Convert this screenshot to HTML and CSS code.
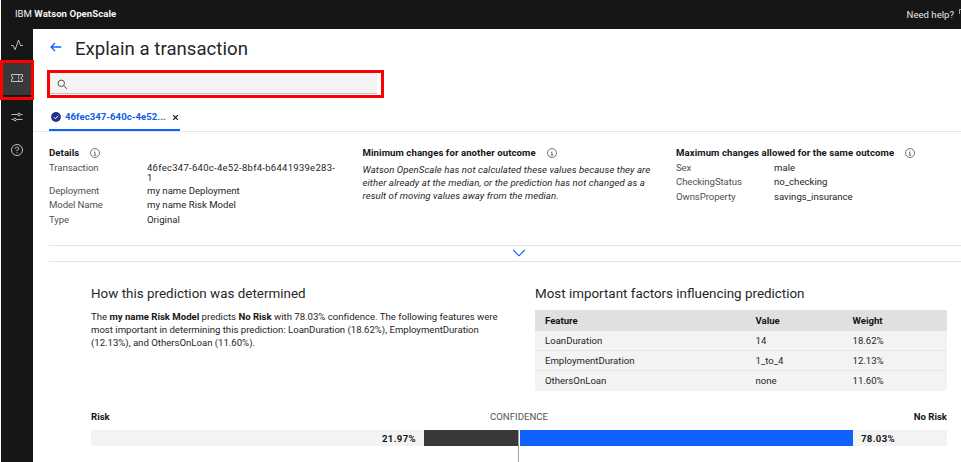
FILE: index.html
```html
<!DOCTYPE html>
<html lang="en">
<head>
<meta charset="utf-8">
<title>IBM Watson OpenScale</title>
<link rel="stylesheet" href="styles.css">
</head>
<body>
<header class="topbar">
  <div class="brand">IBM <b>Watson OpenScale</b></div>
  <div class="help">Need help?<i class="help-mark"></i></div>
</header>
<div class="shell">
  <nav class="rail">
    <a class="rail-item pulse"><svg viewBox="0 0 14 14"><path d="M1 7.500h2l2.200 4.200L8.500 2l2 5.500H13"/></svg></a>
    <a class="rail-item ticket"><svg viewBox="0 0 14 14"><path d="M1.500 3.500h11v2.100a1.400 1.400 0 0 0 0 2.800v2.100h-11V8.400a1.400 1.400 0 0 0 0-2.800z"/><path d="M8.700 4v1.500M8.700 6.300v1.500M8.700 8.600v1.500"/></svg></a>
    <a class="rail-item sliders"><svg viewBox="0 0 14 14"><path d="M1.500 4.500h6M10.500 4.500h2M1.500 9.500h2M6.500 9.500h6"/><circle cx="9" cy="4.500" r="1.300"/><circle cx="5" cy="9.500" r="1.300"/></svg></a>
    <a class="rail-item question"><svg viewBox="0 0 14 14"><circle cx="7" cy="7" r="5.500"/><path d="M5.300 5.900V5.500A1.300 1.300 0 0 1 6.600 4.200h.9a1.300 1.300 0 0 1 0 2.700H7v1.200M7 9.300v1"/></svg></a>
  </nav>
  <main class="page">
    <div class="title-row">
      <svg class="back" viewBox="0 0 12 10"><path d="M11.200 5H1.200M5 1L1.100 5 5 9"/></svg>
      <h1>Explain a transaction</h1>
    </div>
    <div class="search"><div class="field"><svg viewBox="0 0 12 12"><circle cx="4.700" cy="4.700" r="3.500"/><path d="M7.300 7.300l3.500 3.500"/></svg></div></div>
    <div class="tabs">
      <div class="tab">
        <svg class="check" viewBox="0 0 10 10"><circle cx="5" cy="5" r="4.900"/><path d="M2.800 5.100l1.600 1.600 2.900-3"/></svg>
        <span class="tab-name">46fec347-640c-4e52...</span>
        <svg class="close" viewBox="0 0 6 6"><path d="M1 1l4 4M5 1L1 5"/></svg>
      </div>
    </div>
    <section class="summary">
      <div class="block">
        <h2>Details <svg class="info" viewBox="0 0 10 10"><circle cx="5" cy="5" r="4.500"/><path d="M4 4.400h1v2.800M3.700 7.200h2.600M4.600 2.800h.8"/></svg></h2>
        <dl>
          <dt>Transaction</dt><dd class="ident">46fec347-640c-4e52-8bf4-b6441939e283-<br>1</dd>
          <dt>Deployment</dt><dd>my name Deployment</dd>
          <dt>Model Name</dt><dd>my name Risk Model</dd>
          <dt>Type</dt><dd>Original</dd>
        </dl>
      </div>
      <div class="block">
        <h2>Minimum changes for another outcome <svg class="info" viewBox="0 0 10 10"><circle cx="5" cy="5" r="4.500"/><path d="M4 4.400h1v2.800M3.700 7.200h2.600M4.600 2.800h.8"/></svg></h2>
        <p class="note">Watson OpenScale has not calculated these values because they are<br>either already at the median, or the prediction has not changed as a<br>result of moving values away from the median.</p>
      </div>
      <div class="block">
        <h2>Maximum changes allowed for the same outcome <svg class="info" viewBox="0 0 10 10"><circle cx="5" cy="5" r="4.500"/><path d="M4 4.400h1v2.800M3.700 7.200h2.600M4.600 2.800h.8"/></svg></h2>
        <dl>
          <dt>Sex</dt><dd>male</dd>
          <dt>CheckingStatus</dt><dd>no_checking</dd>
          <dt>OwnsProperty</dt><dd>savings_insurance</dd>
        </dl>
      </div>
    </section>
    <div class="expander"><svg viewBox="0 0 14 8"><path d="M1.200 1l5.800 5.800L12.800 1"/></svg></div>
    <section class="explain">
      <div class="story">
        <h3>How this prediction was determined</h3>
        <p>The <b>my name Risk Model</b> predicts <b>No Risk</b> with 78.03% confidence. The following features were<br>most important in determining this prediction: LoanDuration (18.62%), EmploymentDuration<br>(12.13%), and OthersOnLoan (11.60%).</p>
      </div>
      <div class="factors">
        <h3>Most important factors influencing prediction</h3>
        <div class="row head"><span>Feature</span><span>Value</span><span>Weight</span></div>
        <div class="row"><span>LoanDuration</span><span>14</span><span>18.62%</span></div>
        <div class="row"><span>EmploymentDuration</span><span>1_to_4</span><span>12.13%</span></div>
        <div class="row"><span>OthersOnLoan</span><span>none</span><span>11.60%</span></div>
      </div>
    </section>
    <section class="confidence">
      <div class="legend"><b>Risk</b><span>CONFIDENCE</span><b class="right">No Risk</b></div>
      <div class="bar">
        <div class="half left"><span>21.97%</span><i class="risk"></i></div>
        <i class="axis"></i>
        <div class="half"><i class="norisk"></i><span>78.03%</span></div>
      </div>
    </section>
  </main>
</div>
</body>
</html>
```
FILE: styles.css
```css
* { box-sizing: border-box; }
body {
  margin: 0;
  width: 961px;
  height: 462px;
  overflow: hidden;
  padding-left: 1px;
  background: #fff;
  color: #262626;
  font: 9.6px/14px Roboto, "Liberation Sans", sans-serif;
}
h1, h2, h3, p, dl, dd { margin: 0; }
b, h2 { font-weight: 700; color: #161616; }
svg { display: block; fill: none; overflow: visible; flex: none; }

.topbar {
  display: flex;
  justify-content: space-between;
  height: 29px;
  padding: 7px 0 0 14px;
  background: #161616;
  color: #f4f4f4;
}
.brand b { color: #f4f4f4; letter-spacing: .06px; }
.help { display: flex; padding-top: 1px; color: #e8e8e8; }
.help-mark { width: 2px; height: 5px; margin: 1px 0 0 5px; border: 1px solid #a0a0a0; border-width: 1px 0 0 1px; }

.shell { display: flex; height: 433px; }
.rail { flex: none; width: 32px; background: #161616; }
.rail-item { display: flex; align-items: center; justify-content: center; position: relative; }
.rail-item svg { width: 14px; height: 14px; stroke: #d0d0d0; stroke-width: .9; }
.pulse { height: 31px; }
.ticket {
  height: 40px;
  margin: 0 -1px;
  border: 3px solid #f00;
  padding-bottom: 4px;
  background: linear-gradient(#393939 32px, #161616 32px);
}
.sliders { height: 33px; }
.question { height: 33px; }

.page { flex: 1; min-width: 0; }
.title-row { display: flex; height: 41px; padding: 8px 0 0 17px; }
.back { width: 12px; height: 10px; margin-top: 5px; stroke: #0f62fe; stroke-width: 1.300; }
h1 { margin-left: 13px; font: 400 18.600px/24px Roboto, sans-serif; letter-spacing: .03px; color: #262626; }

.search { width: 337px; height: 28px; margin-left: 14px; border: 3px solid #f00; padding: 0 4px 2px 0; }
.field { height: 21px; background: #f3f3f3; border-bottom: 1px solid #c6c6c6; padding: 6px 0 0 7px; }
.field svg { width: 11px; height: 11px; stroke: #444; stroke-width: 1; }

.tabs { height: 34px; border-bottom: 1px solid #e5e5e5; padding-left: 16px; }
.tab { display: flex; align-items: center; width: 131px; height: 33px; border-bottom: 2px solid #0f62fe; padding: 7px 0 0 2px; }
.check { width: 10px; height: 10px; fill: #22338b; }
.check path { stroke: #fff; stroke-width: 1; fill: none; }
.tab-name { margin-left: 4px; width: 107px; font-weight: 700; color: #0f5be5; letter-spacing: .03px; }
.close { width: 7px; height: 7px; stroke: #161616; stroke-width: 1; }

.summary { display: flex; height: 113px; margin-left: 16px; padding-top: 13px; }
.block { flex: none; width: 313.500px; }
h2 { display: flex; gap: 11px; align-items: center; height: 16px; font-size: 9.600px; line-height: 14px; letter-spacing: .08px; }
.info { width: 10px; height: 10px; stroke: #525252; stroke-width: .8; }
dl { display: grid; grid-template-columns: 98px 1fr; line-height: 14.400px; }
dt { color: #525252; letter-spacing: -.08px; }
.ident { letter-spacing: .27px; line-height: 10px; padding: 2px 0 1px; font-size: 9.500px; }
.note { padding-top: 2px; font-style: italic; line-height: 13px; letter-spacing: .07px; white-space: nowrap; }

.expander { display: flex; justify-content: center; height: 17px; margin-left: 16px; padding: 3px 0 0 27px; border: 1px solid #e3e3e3; border-width: 1px 0; }
.expander svg { width: 14px; height: 8px; stroke: #0f62fe; stroke-width: 1.100; }

.explain { display: flex; height: 146px; margin-left: 58px; padding-top: 22px; }
.story { width: 444px; }
.story p { line-height: 13px; white-space: nowrap; padding-top: 4px; letter-spacing: -.01px; }
h3 { height: 22px; font: 400 13.400px/20px Roboto, sans-serif; color: #262626; letter-spacing: .02px; }
.factors { width: 412px; }
.factors h3 { height: 26px; letter-spacing: 0; }
.row { display: grid; grid-template-columns: 210.500px 97px 1fr; height: 20px; padding: 3px 0 0 10px; background: #f3f3f3; border-bottom: 1px solid #e6e6e6; }
.row:last-child { border-bottom: 0; }
.head { height: 21px; padding-top: 4px; border: 0; background: #e0e0e0; color: #161616; font-weight: 700; }

.confidence { width: 856px; margin-left: 58px; }
.legend { display: grid; grid-template-columns: 1fr auto 1fr; height: 22px; padding-top: 2px; }
.legend span { color: #525252; letter-spacing: .01px; }
.right { text-align: right; }
.bar { display: flex; height: 32px; }
.half { display: flex; align-items: center; flex: 1; height: 16px; background: linear-gradient(90deg, #fff 1px, #f3f3f3 1px); color: #161616; font-weight: 700; letter-spacing: .35px; gap: 8px; }
.half.left { flex: none; width: 427px; justify-content: flex-end; background: #f3f3f3; }
.half span { padding-top: 1px; }
.risk { width: 94px; height: 16px; background: #393939; }
.norisk { width: 333px; height: 16px; margin-left: 1px; background: #0f62fe; }
.axis { width: 1px; height: 32px; background: #a0a0a0; }
```
